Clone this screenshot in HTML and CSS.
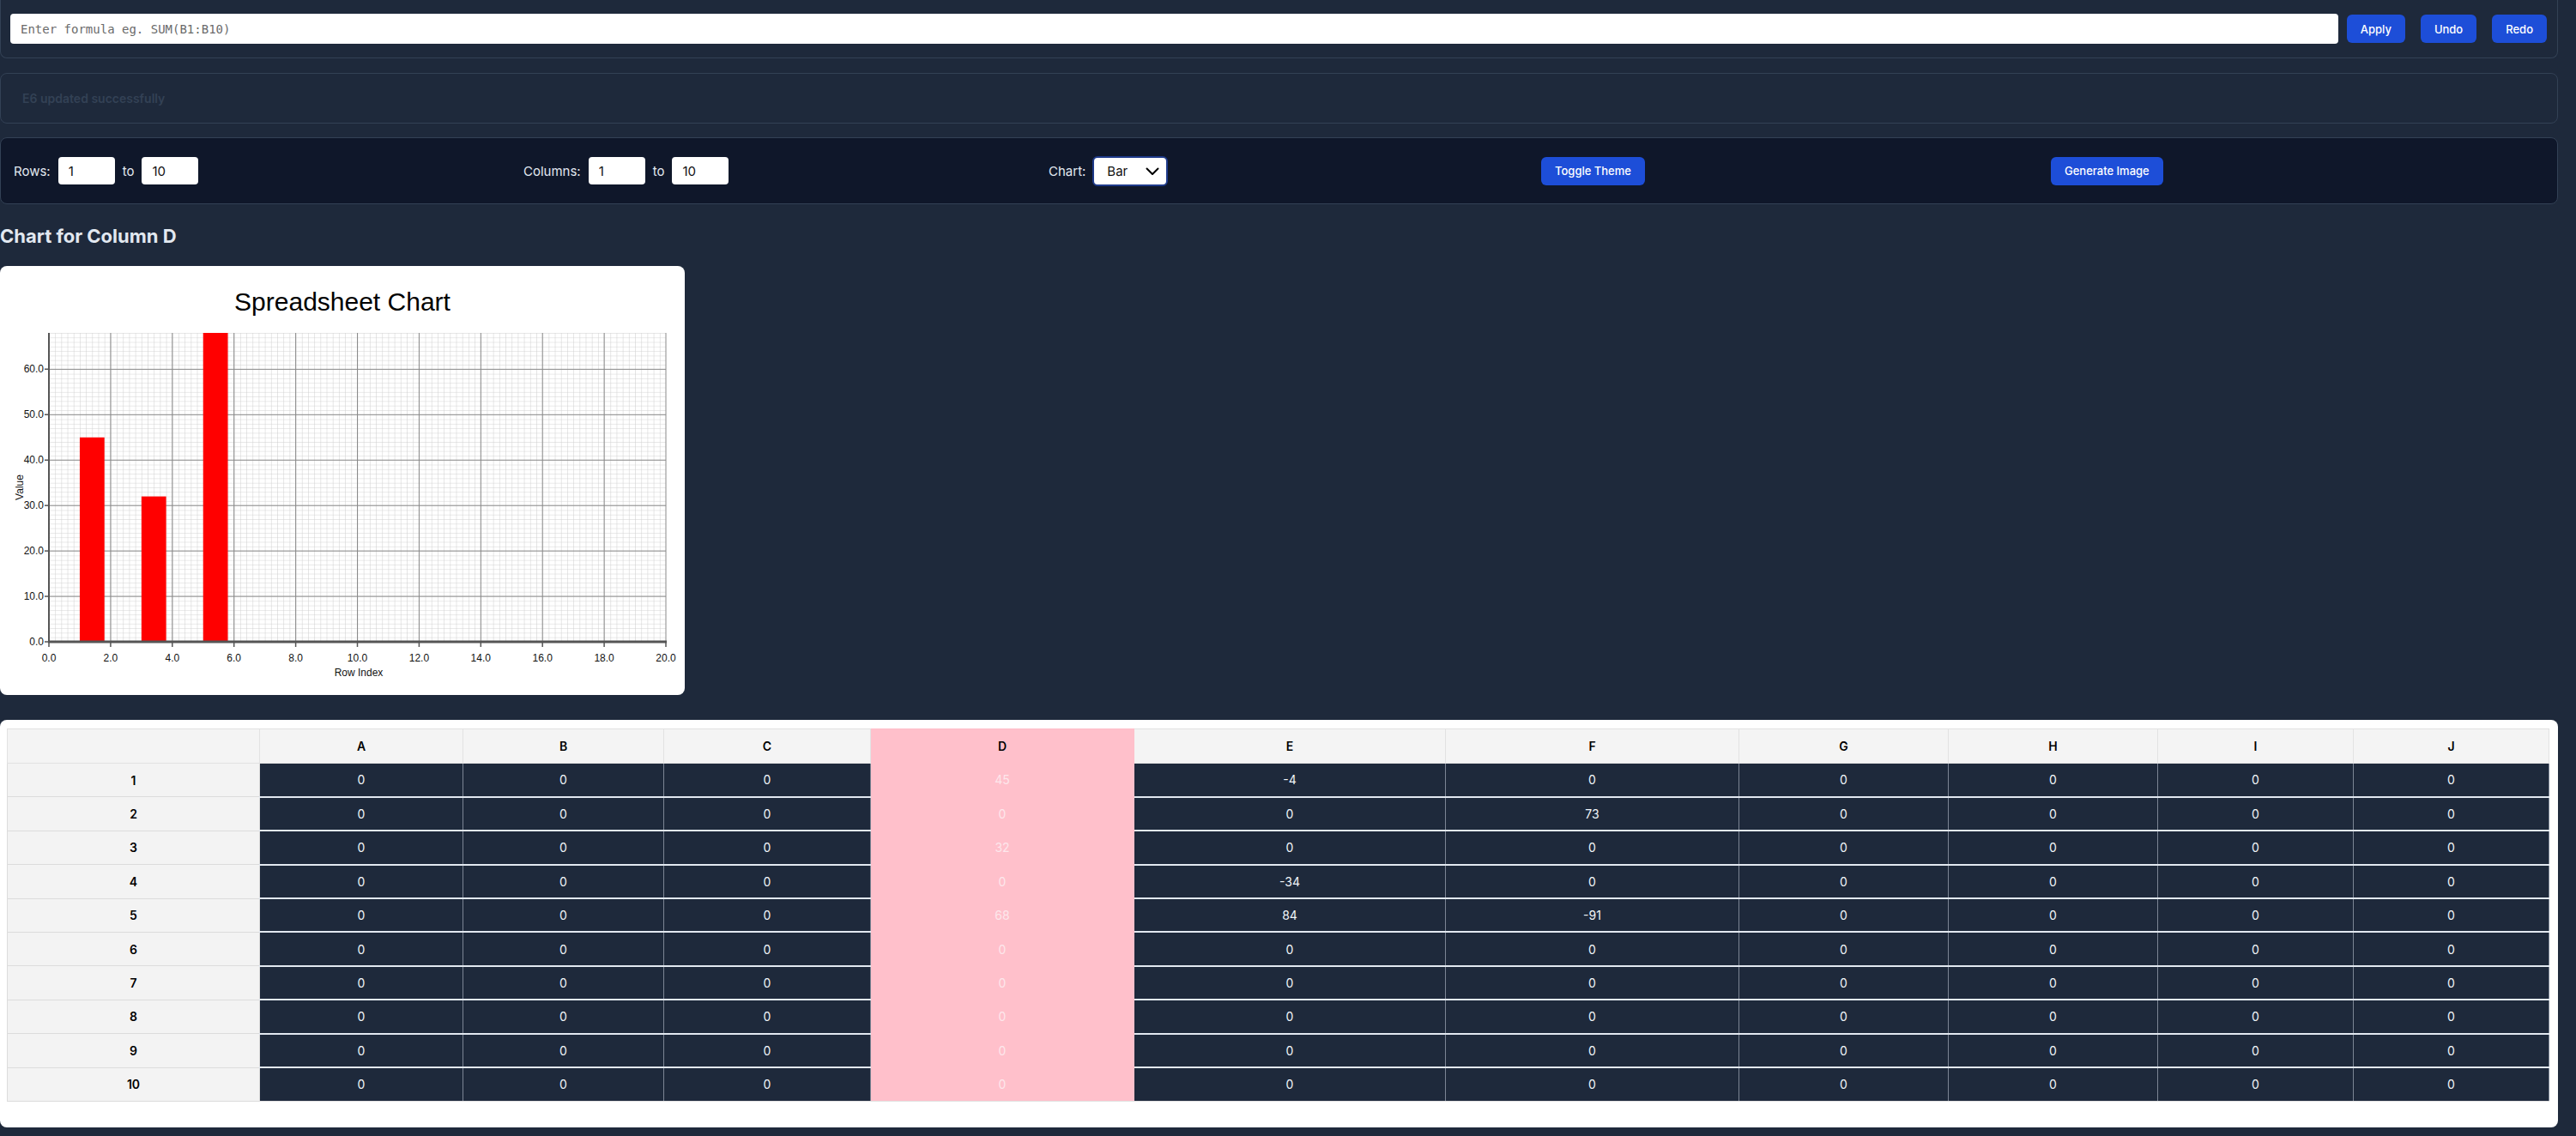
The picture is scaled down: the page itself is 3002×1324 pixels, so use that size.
FILE: index.html
```html
<!DOCTYPE html>
<html lang="en">
<head>
<meta charset="utf-8">
<title>Spreadsheet</title>
<link rel="stylesheet" href="styles.css">
</head>
<body>
<div class="page">
  <div class="card formula-card">
    <input class="formula-input" type="text" placeholder="Enter formula eg. SUM(B1:B10)">
    <div class="btn-group">
      <button class="btn">Apply</button>
      <button class="btn">Undo</button>
      <button class="btn">Redo</button>
    </div>
  </div>

  <div class="card message-card">E6 updated successfully</div>

  <div class="card controls-card">
    <div class="ctrl">
      <span class="ctrl-label">Rows:</span>
      <input class="num-input" type="text" value="1">
      <span class="ctrl-label">to</span>
      <input class="num-input" type="text" value="10">
    </div>
    <div class="ctrl">
      <span class="ctrl-label">Columns:</span>
      <input class="num-input" type="text" value="1">
      <span class="ctrl-label">to</span>
      <input class="num-input" type="text" value="10">
    </div>
    <div class="ctrl ctrl-chart">
      <span class="ctrl-label">Chart:</span>
      <span class="select-wrap">
        <select class="chart-select"><option>Bar</option><option>Line</option></select>
        <svg class="chevron" width="16" height="10" viewBox="0 0 16 10"><path d="M1.5 1.5 L8 8 L14.5 1.5" fill="none" stroke="#000" stroke-width="2" stroke-linecap="round" stroke-linejoin="round"/></svg>
      </span>
    </div>
    <div class="ctrl"><button class="btn">Toggle Theme</button></div>
    <div class="ctrl"><button class="btn">Generate Image</button></div>
  </div>

  <h2 class="chart-heading">Chart for Column D</h2>

  <div class="chart-card">
    <svg class="chart-svg" width="798" height="500" viewBox="0 0 798 500">
      <defs>
        <pattern id="minor" patternUnits="userSpaceOnUse" x="57" y="438" width="7.19" height="5.294">
          <path d="M0 0 V5.294 M0 0 H7.19" fill="none" stroke="#cfcfcf" stroke-width="1"/>
        </pattern>
      </defs>
      <text class="chart-title" x="399" y="52" text-anchor="middle">Spreadsheet Chart</text>
      <rect x="57" y="78" width="719" height="360" fill="url(#minor)"/>
      <g stroke="#8a8a8a" stroke-width="1">
        <line x1="128.9" y1="78" x2="128.9" y2="438"/>
        <line x1="200.8" y1="78" x2="200.8" y2="438"/>
        <line x1="272.7" y1="78" x2="272.7" y2="438"/>
        <line x1="344.6" y1="78" x2="344.6" y2="438"/>
        <line x1="416.5" y1="78" x2="416.5" y2="438"/>
        <line x1="488.4" y1="78" x2="488.4" y2="438"/>
        <line x1="560.3" y1="78" x2="560.3" y2="438"/>
        <line x1="632.2" y1="78" x2="632.2" y2="438"/>
        <line x1="704.1" y1="78" x2="704.1" y2="438"/>
        <line x1="776" y1="78" x2="776" y2="438"/>
        <line x1="57" y1="385.06" x2="776" y2="385.06"/>
        <line x1="57" y1="332.12" x2="776" y2="332.12"/>
        <line x1="57" y1="279.18" x2="776" y2="279.18"/>
        <line x1="57" y1="226.24" x2="776" y2="226.24"/>
        <line x1="57" y1="173.3" x2="776" y2="173.3"/>
        <line x1="57" y1="120.36" x2="776" y2="120.36"/>
      </g>
      <g fill="#ff0000">
        <rect x="92.95" y="199.8" width="28.76" height="238.2"/>
        <rect x="164.85" y="268.6" width="28.76" height="169.4"/>
        <rect x="236.75" y="78" width="28.76" height="360"/>
      </g>
      <g stroke="#555" stroke-width="1.5">
        <line x1="52" y1="438" x2="57" y2="438"/>
        <line x1="52" y1="385.06" x2="57" y2="385.06"/>
        <line x1="52" y1="332.12" x2="57" y2="332.12"/>
        <line x1="52" y1="279.18" x2="57" y2="279.18"/>
        <line x1="52" y1="226.24" x2="57" y2="226.24"/>
        <line x1="52" y1="173.3" x2="57" y2="173.3"/>
        <line x1="52" y1="120.36" x2="57" y2="120.36"/>
        <line x1="57" y1="438" x2="57" y2="444"/>
        <line x1="128.9" y1="438" x2="128.9" y2="444"/>
        <line x1="200.8" y1="438" x2="200.8" y2="444"/>
        <line x1="272.7" y1="438" x2="272.7" y2="444"/>
        <line x1="344.6" y1="438" x2="344.6" y2="444"/>
        <line x1="416.5" y1="438" x2="416.5" y2="444"/>
        <line x1="488.4" y1="438" x2="488.4" y2="444"/>
        <line x1="560.3" y1="438" x2="560.3" y2="444"/>
        <line x1="632.2" y1="438" x2="632.2" y2="444"/>
        <line x1="704.1" y1="438" x2="704.1" y2="444"/>
        <line x1="776" y1="438" x2="776" y2="444"/>
      </g>
      <line x1="57" y1="78" x2="57" y2="439" stroke="#555" stroke-width="2"/>
      <line x1="56" y1="438" x2="777" y2="438" stroke="#555" stroke-width="3"/>
      <g class="tick" text-anchor="end">
        <text x="51" y="442">0.0</text>
        <text x="51" y="389">10.0</text>
        <text x="51" y="336">20.0</text>
        <text x="51" y="283">30.0</text>
        <text x="51" y="230">40.0</text>
        <text x="51" y="177">50.0</text>
        <text x="51" y="124">60.0</text>
      </g>
      <g class="tick" text-anchor="middle">
        <text x="57" y="461">0.0</text>
        <text x="128.9" y="461">2.0</text>
        <text x="200.8" y="461">4.0</text>
        <text x="272.7" y="461">6.0</text>
        <text x="344.6" y="461">8.0</text>
        <text x="416.5" y="461">10.0</text>
        <text x="488.4" y="461">12.0</text>
        <text x="560.3" y="461">14.0</text>
        <text x="632.2" y="461">16.0</text>
        <text x="704.1" y="461">18.0</text>
        <text x="776" y="461">20.0</text>
      </g>
      <text class="axis-label" x="418" y="478" text-anchor="middle">Row Index</text>
      <text class="axis-label" x="0" y="0" text-anchor="middle" transform="translate(27 258) rotate(-90)">Value</text>
    </svg>
  </div>

  <div class="card table-card">
    <table class="sheet">
      <colgroup>
        <col class="w-rh"><col class="w-a"><col class="w-b"><col class="w-c"><col class="w-d"><col class="w-e"><col class="w-f"><col class="w-g"><col class="w-h"><col class="w-i"><col class="w-j">
      </colgroup>
      <thead>
        <tr><th></th><th>A</th><th>B</th><th>C</th><th class="sel">D</th><th>E</th><th>F</th><th>G</th><th>H</th><th>I</th><th>J</th></tr>
      </thead>
      <tbody>
        <tr><th>1</th><td>0</td><td>0</td><td>0</td><td class="sel">45</td><td>-4</td><td>0</td><td>0</td><td>0</td><td>0</td><td>0</td></tr>
        <tr><th>2</th><td>0</td><td>0</td><td>0</td><td class="sel">0</td><td>0</td><td>73</td><td>0</td><td>0</td><td>0</td><td>0</td></tr>
        <tr><th>3</th><td>0</td><td>0</td><td>0</td><td class="sel">32</td><td>0</td><td>0</td><td>0</td><td>0</td><td>0</td><td>0</td></tr>
        <tr><th>4</th><td>0</td><td>0</td><td>0</td><td class="sel">0</td><td>-34</td><td>0</td><td>0</td><td>0</td><td>0</td><td>0</td></tr>
        <tr><th>5</th><td>0</td><td>0</td><td>0</td><td class="sel">68</td><td>84</td><td>-91</td><td>0</td><td>0</td><td>0</td><td>0</td></tr>
        <tr><th>6</th><td>0</td><td>0</td><td>0</td><td class="sel">0</td><td>0</td><td>0</td><td>0</td><td>0</td><td>0</td><td>0</td></tr>
        <tr><th>7</th><td>0</td><td>0</td><td>0</td><td class="sel">0</td><td>0</td><td>0</td><td>0</td><td>0</td><td>0</td><td>0</td></tr>
        <tr><th>8</th><td>0</td><td>0</td><td>0</td><td class="sel">0</td><td>0</td><td>0</td><td>0</td><td>0</td><td>0</td><td>0</td></tr>
        <tr><th>9</th><td>0</td><td>0</td><td>0</td><td class="sel">0</td><td>0</td><td>0</td><td>0</td><td>0</td><td>0</td><td>0</td></tr>
        <tr><th>10</th><td>0</td><td>0</td><td>0</td><td class="sel">0</td><td>0</td><td>0</td><td>0</td><td>0</td><td>0</td><td>0</td></tr>
      </tbody>
    </table>
  </div>
</div>
</body>
</html>
```

FILE: styles.css
```css
* { box-sizing: border-box; }

html, body {
  margin: 0;
  padding: 0;
  background: #1e293b;
}

body {
  font-family: Inter, "Noto Sans", "Liberation Sans", sans-serif;
  color: #e2e8f0;
  height: 1324px;
  overflow: hidden;
}

.page {
  width: 2981px;
}

.card {
  border: 1px solid #334155;
  border-radius: 8px;
}

.formula-card {
  height: 69px;
  margin-top: -1px;
  border-top-color: transparent;
  border-top-left-radius: 0;
  border-top-right-radius: 0;
  display: flex;
  align-items: center;
  gap: 10px;
  padding: 0 12px 0 11px;
}

.formula-input {
  flex: 1;
  height: 35px;
  border: none;
  border-radius: 4px;
  background: #fff;
  padding: 0 12px;
  font-family: "DejaVu Sans Mono", "Liberation Mono", monospace;
  font-size: 14px;
  color: #111;
}

.formula-input::placeholder {
  color: #6b6b6b;
}

.btn-group {
  display: flex;
  gap: 18px;
}

.btn {
  height: 33px;
  padding: 0 16px;
  border: none;
  border-radius: 6px;
  background: #1d4ed8;
  color: #fff;
  font-family: Inter, "Noto Sans", sans-serif;
  font-size: 13px;
  font-weight: 500;
}

.message-card {
  margin-top: 17px;
  height: 59px;
  display: flex;
  align-items: center;
  padding-left: 25px;
  font-size: 14px;
  font-weight: 600;
  color: #334155;
}

.controls-card {
  margin-top: 16px;
  height: 78px;
  background: #0f172a;
  display: grid;
  grid-template-columns: 594px 612px 574px 594px 1fr;
  align-items: center;
  padding: 0 15px 0 15px;
}

.ctrl {
  display: flex;
  align-items: center;
  gap: 9px;
}

.ctrl-chart {
  gap: 8px;
}

.ctrl-label {
  font-size: 15px;
  color: #e2e8f0;
}

.num-input {
  width: 66px;
  height: 32px;
  border: none;
  border-radius: 4px;
  background: #fff;
  padding: 0 12px;
  font-family: Inter, "Noto Sans", sans-serif;
  font-size: 15px;
  color: #111;
}

.select-wrap {
  position: relative;
  display: inline-block;
}

.chart-select {
  appearance: none;
  -webkit-appearance: none;
  width: 88px;
  height: 35px;
  border: 2px solid #1e3a8a;
  border-radius: 6px;
  background: #fff;
  padding: 0 0 0 15px;
  font-family: Inter, "Noto Sans", sans-serif;
  font-size: 15px;
  color: #111;
}

.chevron {
  position: absolute;
  right: 10px;
  top: 13px;
  pointer-events: none;
}

.chart-heading {
  margin: 22px 0 0 0;
  height: 50px;
  font-size: 22px;
  font-weight: 700;
  line-height: 30px;
  color: #e2e8f0;
}

.chart-card {
  width: 798px;
  height: 500px;
  background: #fff;
  border-radius: 8px;
  overflow: hidden;
}

.chart-svg {
  display: block;
  font-family: "Liberation Sans", Arial, sans-serif;
}

.chart-title {
  font-size: 30px;
  fill: #000;
}

.tick {
  font-size: 12px;
  fill: #111;
}

.axis-label {
  font-size: 12px;
  fill: #111;
}

.table-card {
  margin-top: 29px;
  height: 475px;
  background: #fff;
  border: none;
  padding: 10px 11px 0 8px;
}

.sheet {
  width: 2962px;
  table-layout: fixed;
  border-collapse: collapse;
  font-family: Inter, "Noto Sans", sans-serif;
  font-size: 14px;
}

.w-rh { width: 294px; }
.w-a { width: 237px; }
.w-b { width: 234px; }
.w-c { width: 241px; }
.w-d { width: 307px; }
.w-e { width: 363px; }
.w-f { width: 342px; }
.w-g { width: 244px; }
.w-h { width: 244px; }
.w-i { width: 228px; }
.w-j { width: 228px; }

.sheet th,
.sheet td {
  text-align: center;
  padding: 0;
}

.sheet thead th {
  height: 40px;
  background: #f4f4f4;
  color: #000;
  font-weight: 600;
  border: 1px solid #e2e2e2;
}

.sheet tbody th {
  height: 39.4px;
  background: #f3f3f3;
  color: #000;
  font-weight: 600;
  border: 1px solid #dcdcdc;
}

.sheet td {
  height: 39.4px;
  background: #1e293b;
  color: #f1f5f9;
  border-left: 1px solid #7c8594;
  border-right: 1px solid #7c8594;
  border-top: 2px solid #e2e8f0;
  border-bottom: 2px solid #e2e8f0;
}

.sheet tbody tr:first-child td {
  border-top: 1px solid #e2e2e2;
}

.sheet tbody tr:last-child td {
  border-bottom: 1px solid #e2e2e2;
}

.sheet .sel {
  background: #ffc0cb;
  border-left-color: #ffc0cb;
  border-right-color: #ffc0cb;
}

.sheet td.sel {
  color: #fde7ec;
  border-top-color: #ffc0cb;
  border-bottom-color: #ffc0cb;
}

.sheet thead th.sel {
  border-top-color: #ffc0cb;
  border-bottom-color: #ffc0cb;
}
```
